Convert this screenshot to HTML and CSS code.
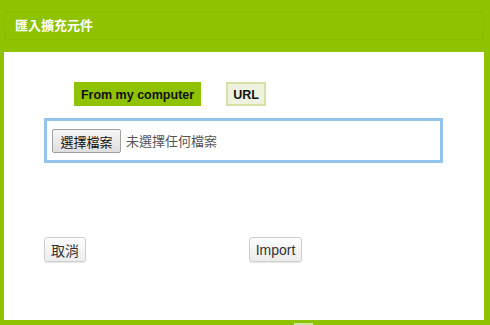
FILE: index.html
```html
<!DOCTYPE html>
<html lang="zh-TW">
<head>
    <meta charset="UTF-8">
    <title>匯入擴充元件</title>
    <link rel="stylesheet" href="styles.css">
</head>
<body>
    <div class="dialog-head">匯入擴充元件</div>

    <div class="dialog-body">
        <div class="tabs">
            <span class="tab active">From my computer</span>
            <span class="tab">URL</span>
        </div>

        <div class="file-box">
            <button class="file-btn">選擇檔案</button>
            <span class="file-name">未選擇任何檔案</span>
        </div>

        <div class="actions">
            <button class="btn">取消</button>
            <button class="btn btn-latin">Import</button>
        </div>
    </div>

    <div class="footer-bar"><span class="grip"></span></div>
</body>
</html>
```

FILE: styles.css
```css
* {
    margin: 0;
    padding: 0;
    box-sizing: border-box;
}

body {
    background: #8fc200;
    font-family: Arial, "Liberation Sans", "Noto Sans CJK TC", sans-serif;
    width: 490px;
    height: 325px;
    overflow: hidden;
}

.dialog-head {
    margin: 12px 6px 0 4px;
    height: 28px;
    border: 1px solid #8abb00;
    color: white;
    font-weight: bold;
    font-size: 13px;
    line-height: 26px;
    padding-left: 10px;
}

.dialog-body {
    margin: 12px 0 0 4px;
    width: 480px;
    height: 268px;
    background: white;
    padding: 30px 0 0 40px;
}

.tabs {
    display: flex;
    gap: 25px;
    margin-left: 30px;
}

.tab {
    height: 24px;
    width: 40px;
    text-align: center;
    font-size: 12.5px;
    font-weight: bold;
    line-height: 23px;
    color: #111;
    background: #eef2df;
    border: 2px solid #d5e1a6;
}

.tab.active {
    width: 127px;
    background: #8fc200;
    border-color: #8fc200;
}

.file-box {
    margin-top: 12px;
    width: 399px;
    height: 45px;
    border: 3px solid #94c3ee;
    display: flex;
    align-items: center;
    padding: 0 5px;
    gap: 5px;
}

.file-btn {
    height: 24px;
    width: 69px;
    font-family: "Noto Sans CJK TC", sans-serif;
    font-size: 13px;
    color: #111;
    background: linear-gradient(#f6f6f6, #dedede);
    border: 1px solid #a0a0a0;
    border-radius: 2px;
    margin-top: 1px;
}

.file-name {
    font-family: "Noto Sans CJK TC", sans-serif;
    font-size: 13px;
    color: #555;
}

.actions {
    display: flex;
    margin-top: 74px;
    width: 258px;
    justify-content: space-between;
}

.btn {
    height: 25px;
    padding: 0 6px;
    font-family: "Noto Sans CJK TC", sans-serif;
    font-size: 14px;
    color: #333;
    background: linear-gradient(#fdfdfd, #ececec);
    border: 1px solid #cfcfcf;
    border-radius: 3px;
    box-shadow: 0 1px 1px rgba(0,0,0,0.1);
}

.btn-latin {
    font-family: Arial, "Liberation Sans", sans-serif;
    width: 53px;
    padding: 0;
}

.footer-bar {
    height: 5px;
    position: relative;
}

.grip {
    position: absolute;
    left: 294px;
    top: 3px;
    width: 19px;
    height: 2px;
    background: #cfe39a;
}
```
